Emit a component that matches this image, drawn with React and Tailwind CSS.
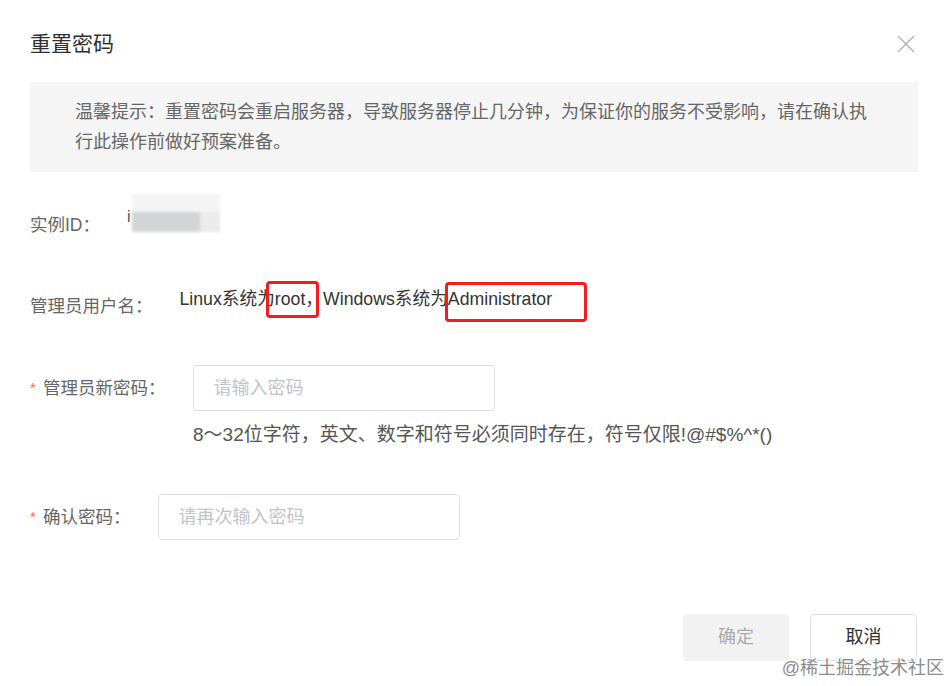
import { X } from "lucide-react";

const font = "font-['Liberation_Sans','Noto_Sans_CJK_SC',sans-serif]";

function Label({ children, required }) {
  return (
    <div className="flex shrink-0 items-center text-[17.5px] leading-[24px] text-[#666]">
      {required && <span className="mr-[6px] w-[7px] text-[15px] text-[#f56c6c]">*</span>}
      <span>{children}</span>
    </div>
  );
}

function Marked({ children, box }) {
  return (
    <span className="relative">
      {children}
      <span className={`pointer-events-none absolute rounded-[4px] border-[3px] border-[#f21d1d] ${box}`} />
    </span>
  );
}

function PasswordInput({ placeholder }) {
  return (
    <input
      className="h-[46px] w-[302px] rounded-[4px] border border-[#dcdfe6] bg-white pl-[20px] text-[18px] text-[#333] outline-none placeholder:text-[#c0c4cc]"
      placeholder={placeholder}
      type="password"
    />
  );
}

export default function App() {
  return (
    <div className={`relative h-[686px] w-[949px] overflow-hidden bg-white ${font}`}>
      <header className="flex items-center justify-between pl-[30px] pr-[28px] pt-[29px]">
        <h1 className="text-[21px] leading-[30px] text-[#303133]">重置密码</h1>
        <X className="text-[#b0b0b0]" size={30} strokeWidth={1.1} />
      </header>

      <div className="ml-[30px] mt-[23px] w-[888px] bg-[#f5f5f5] py-[15px] pl-[45px] pr-[40px] text-[18px] leading-[30px] text-[#666]">
        温馨提示：重置密码会重启服务器，导致服务器停止几分钟，为保证你的服务不受影响，请在确认执行此操作前做好预案准备。
      </div>

      <div className="flex flex-col pl-[30px]">
        <div className="mt-[22px] flex h-[38px] items-start">
          <div className="mt-[19px]">
            <Label>实例ID：</Label>
          </div>
          <span className="ml-[27px] mt-[14px] text-[16px] leading-[18px] text-[#555]">i</span>
          <div className="ml-[1px] flex h-[38px] w-[88px] flex-col blur-[1.5px]">
            <div className="h-[18px] bg-[#f4f4f4]" />
            <div className="flex h-[20px]">
              <div className="w-[68px] bg-[#d2d4d5]" />
              <div className="flex-1 bg-[#ebebeb]" />
            </div>
          </div>
        </div>

        <div className="mt-[49px] flex items-start">
          <div className="mt-[13px]">
            <Label>管理员用户名：</Label>
          </div>
          <div className="ml-[27px] mt-[6px] text-[17.7px] leading-[24px] text-[#333]">
            Linux系统为
            <Marked box="-left-[9px] -top-[8px] -bottom-[9px] right-[4px]">root，</Marked>
            Windows系统为
            <Marked box="-left-[3px] -top-[7px] -bottom-[13px] -right-[35px]">Administrator</Marked>
          </div>
        </div>

        <div className="mt-[47px] flex items-center">
          <Label required>管理员新密码：</Label>
          <div className="ml-[27px]">
            <PasswordInput placeholder="请输入密码" />
          </div>
        </div>
        <p className="ml-[163px] mt-[12px] text-[19px] leading-[24px] text-[#555]">
          8～32位字符，英文、数字和符号必须同时存在，符号仅限!@#$%^*()
        </p>

        <div className="mt-[47px] flex items-center">
          <Label required>确认密码：</Label>
          <div className="ml-[27px]">
            <PasswordInput placeholder="请再次输入密码" />
          </div>
        </div>
      </div>

      <div className="mt-[74px] flex justify-end gap-[21px] pr-[32px]">
        <button
          className="relative h-[47px] w-[106px] cursor-not-allowed overflow-hidden rounded-[4px] bg-[#f2f2f2] text-[18px] text-[#aaa]"
          disabled
          type="button"
        >
          确定
        </button>
        <button
          className="h-[47px] w-[107px] rounded-[4px] border border-[#dcdfe6] bg-white text-[18px] text-[#303133]"
          type="button"
        >
          取消
        </button>
      </div>

      <span className="absolute right-[5px] top-[656px] text-[18px] leading-[24px] text-[#8c8c8c] [text-shadow:0_0_2px_#fff]">
        @稀土掘金技术社区
      </span>
    </div>
  );
}
